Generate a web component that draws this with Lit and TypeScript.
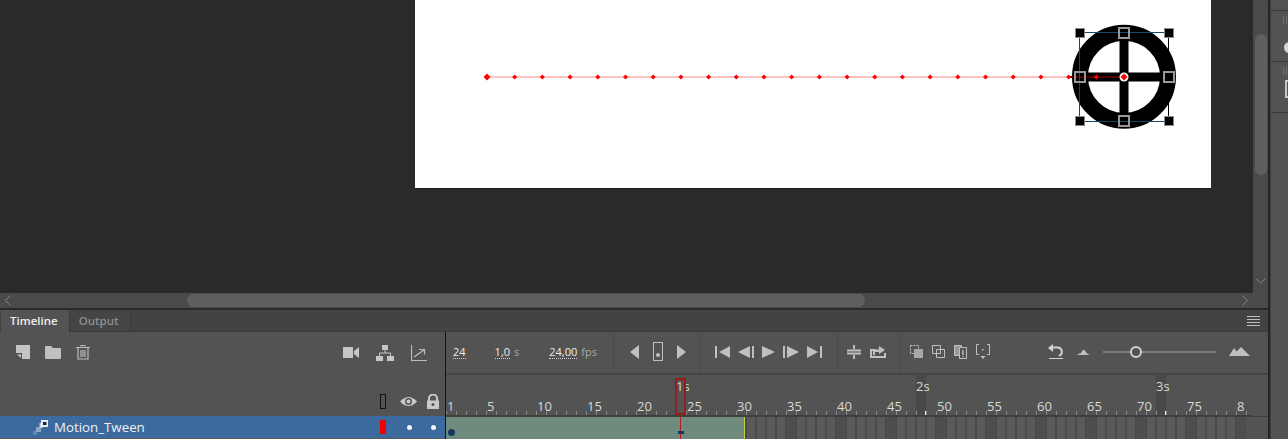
import { LitElement, html, css, svg } from "lit";
import { customElement } from "lit/decorators.js";

const FRAME_W = 10;
const TOTAL_FRAMES = 80;
const frameX = (n: number) => (n - 1) * FRAME_W;

const frameLabels = [1, 5, 10, 15, 20, 25, 30, 35, 40, 45, 50, 55, 60, 65, 70, 75];
const secondMarks = [
  { label: "2s", frame: 48 },
  { label: "3s", frame: 72 },
];
const pathDots = Array.from({ length: 24 }, (_, i) => 487 + (i * 637) / 23);

@customElement("app-root")
export class AppRoot extends LitElement {
  static styles = css`
    :host {
      display: flex;
      width: 1288px;
      height: 439px;
      overflow: hidden;
      background: #2a2a2a;
      font-family: "Open Sans", sans-serif;
      color: #e0e0e0;
    }
    svg {
      display: block;
      flex: none;
    }
    .main {
      width: 1268px;
      display: flex;
      flex-direction: column;
      border-right: 1px solid #222;
      box-sizing: content-box;
    }
    .side {
      flex: 1;
      margin-left: 1px;
      background: #535353;
      border-left: 1px solid #3c3c3c;
    }
    .side-sec {
      height: 50px;
      border-bottom: 1px solid #3a3a3a;
      display: flex;
      flex-direction: column;
      align-items: flex-end;
      overflow: hidden;
    }
    .side-sec.top {
      height: 10px;
    }
    .grip {
      width: 4px;
      height: 8px;
      margin: 5px 0 0;
      border-left: 1px solid #6c6c6c;
      border-right: 1px solid #6c6c6c;
      align-self: center;
      box-sizing: border-box;
      position: relative;
      left: 5px;
    }
    .side-dot {
      width: 11px;
      height: 11px;
      margin: 18px -7px 0 0;
      border-radius: 50%;
      background: #d6d6d6;
    }
    .side-doc {
      width: 12px;
      height: 14px;
      margin: 5px -13px 0 0;
      border: 2px solid #c8c8c8;
    }

    .stage-row {
      height: 293px;
      display: flex;
    }
    .canvas {
      width: 1253px;
      padding-left: 415px;
      box-sizing: border-box;
    }
    .paper {
      width: 796px;
      height: 188px;
      background: #fff;
      box-shadow: 0 1px 0 #1c1c1c;
    }
    .vscroll {
      width: 15px;
      background: #4a4a4a;
      padding: 34px 1px 0;
      box-sizing: border-box;
      display: flex;
      flex-direction: column;
      align-items: center;
    }
    .vthumb {
      width: 12px;
      height: 141px;
      background: #5f5f5f;
      border-radius: 6px;
    }
    .vscroll svg {
      margin-top: 103px;
    }
    .hscroll {
      height: 15px;
      background: #4a4a4a;
      display: flex;
      align-items: center;
      padding-left: 5px;
      box-sizing: border-box;
    }
    .hthumb {
      width: 678px;
      height: 13px;
      margin-left: 176px;
      background: #5f5f5f;
      border-radius: 7px;
    }
    .hscroll svg.next {
      margin-left: 377px;
    }
    .rule {
      height: 2px;
      background: #292929;
    }

    .tabs {
      height: 22px;
      display: flex;
      background: #434343;
      border-bottom: 1px solid #3a3a3a;
      box-sizing: border-box;
      align-items: stretch;
      padding-left: 1px;
    }
    .tab {
      font-size: 11.5px;
      font-weight: 600;
      line-height: 21px;
      padding: 0 11px 0 9px;
      color: #8f8f8f;
      background: #454545;
      border-right: 1px solid #3a3a3a;
    }
    .tab.on {
      color: #ededed;
      background: #535353;
      margin-bottom: -1px;
    }
    .tabs .fill {
      flex: 1;
    }
    .menu {
      margin: 6px 8px 0 0;
    }

    .body {
      flex: 1;
      display: flex;
      background: #535353;
    }
    .layers {
      width: 445px;
      display: flex;
      flex-direction: column;
      border-right: 1px solid #111;
      box-sizing: content-box;
    }
    .layer-tools {
      height: 42px;
      display: flex;
      align-items: center;
      padding: 0 18px 3px 16px;
      box-sizing: border-box;
      margin-top: 1px;
    }
    .layer-tools .l {
      display: flex;
      gap: 15px;
      flex: 1;
    }
    .layer-tools .r {
      display: flex;
      align-items: center;
      gap: 17px;
    }
    .layer-head {
      height: 41px;
      display: flex;
      align-items: flex-end;
      justify-content: flex-end;
      gap: 9px;
      padding: 0 5px 7px 0;
      box-sizing: border-box;
    }
    .layer-head .eye {
      margin-bottom: 2px;
    }
    .outline-box {
      width: 6px;
      height: 15px;
      border: 1px solid #111;
      box-sizing: border-box;
      margin-right: 5px;
    }
    .layer-row {
      height: 22px;
      background: #3c6a9e;
      display: flex;
      align-items: center;
      padding-left: 33px;
      font-size: 13.3px;
      color: #f0f0f0;
    }
    .layer-row .name {
      margin-left: 6px;
      width: 326px;
    }
    .swatch {
      width: 6px;
      height: 14px;
      background: #f00000;
    }
    .dot {
      width: 5px;
      height: 5px;
      border-radius: 50%;
      background: #f5f5f5;
    }
    .dot.eye {
      margin-left: 21px;
    }
    .dot.lock {
      margin-left: 19px;
    }

    .frames {
      flex: 1;
      display: flex;
      flex-direction: column;
      min-width: 0;
    }
    .controls {
      height: 42px;
      margin-top: 1px;
      display: flex;
      border-bottom: 2px solid #454545;
      box-sizing: border-box;
    }
    .group {
      display: flex;
      align-items: center;
      border-right: 1px solid #4b4b4b;
      box-sizing: border-box;
      padding-bottom: 3px;
    }
    .counters {
      width: 168px;
      padding-left: 7px;
      font-size: 11px;
      color: #ececec;
    }
    .num {
      border-bottom: 1px dotted #cfcfcf;
      line-height: 13px;
    }
    .unit {
      color: #a8a8a8;
      margin-left: 4px;
    }
    .c-elapsed {
      margin-left: 29px;
    }
    .c-fps {
      margin-left: 30px;
    }
    .nav {
      width: 87px;
      padding-left: 16px;
      gap: 14px;
    }
    .play {
      width: 137px;
      padding-left: 14px;
      gap: 8px;
    }
    .edit {
      width: 62px;
      padding-left: 9px;
      gap: 9px;
    }
    .onion {
      width: 148px;
      padding-left: 10px;
      gap: 9px;
      border-right: 0;
    }
    .zoom {
      display: flex;
      align-items: center;
      gap: 13px;
      padding-bottom: 3px;
    }
    .slider {
      width: 113px;
      height: 2px;
      background: #7c7c7c;
      position: relative;
    }
    .knob {
      position: absolute;
      left: 27px;
      top: -5px;
      width: 12px;
      height: 12px;
      border: 2px solid #d2d2d2;
      border-radius: 50%;
      background: #535353;
      box-sizing: border-box;
    }

    .ruler {
      height: 42px;
      position: relative;
      overflow: hidden;
      border-bottom: 1px solid #3f3f3f;
      box-sizing: border-box;
    }
    .ticks {
      position: absolute;
      left: 0;
      width: 806px;
      bottom: 1px;
      height: 4px;
      background: repeating-linear-gradient(
        90deg,
        #8a8a8a 0 1px,
        transparent 1px 10px
      );
    }
    .ruler-line {
      position: absolute;
      left: 0;
      width: 806px;
      bottom: 0;
      height: 1px;
      background: #3d3d3d;
    }
    .flabel {
      position: absolute;
      top: 22px;
      font-size: 13px;
      line-height: 18px;
      color: #d8d8d8;
    }
    .slabel {
      position: absolute;
      top: 2px;
      font-size: 13px;
      line-height: 18px;
      color: #d8d8d8;
    }
    .sband {
      position: absolute;
      top: 0;
      bottom: 0;
      width: 10px;
      background: #494949;
    }
    .sband::before,
    .sband::after {
      content: "";
      position: absolute;
      bottom: 1px;
      width: 1px;
      height: 4px;
      background: #f0f0f0;
    }
    .sband::before {
      left: 0;
    }
    .sband::after {
      right: 0;
    }
    .playhead {
      position: absolute;
      left: 229px;
      top: 3px;
      width: 11px;
      height: 37px;
      border: 1px solid #a51818;
      box-sizing: border-box;
      box-shadow: inset 0 0 0 1px #8f1d1d;
    }

    .track {
      flex: 1;
      position: relative;
      overflow: hidden;
      background: #535353;
    }
    .tween {
      position: absolute;
      left: 0;
      top: 0;
      width: 299px;
      height: 100%;
      box-sizing: border-box;
      background: #6f8b7e;
      border-right: 1px solid #c8cf4c;
    }
    .cells {
      position: absolute;
      left: 299px;
      top: 0;
      width: 500px;
      height: 100%;
      display: flex;
      background: #4b4b4b;
      padding-left: 1px;
      box-sizing: content-box;
    }
    .cell {
      width: 10px;
      flex: none;
      box-sizing: border-box;
      background: #5a5a5a;
      border-left: 1px solid #4b4b4b;
      border-right: 1px solid #4b4b4b;
    }
    .cell.fifth {
      background: #4e4e4e;
    }
    .key {
      position: absolute;
      left: 2px;
      top: 12px;
      width: 7px;
      height: 7px;
      border-radius: 50%;
      background: #16385f;
    }
    .now-line {
      position: absolute;
      left: 234px;
      top: 0;
      width: 1px;
      height: 100%;
      background: #b31f1f;
    }
    .now-key {
      position: absolute;
      left: 232px;
      top: 14px;
      width: 6px;
      height: 3px;
      background: #16385f;
    }
    .foot {
      height: 1px;
      background: #5a5a5a;
    }
  `;

  private stage() {
    const handles = [
      [1080, 33, 1],
      [1169, 33, 1],
      [1080, 121, 1],
      [1169, 121, 1],
      [1124, 33, 0],
      [1124, 121, 0],
      [1080, 77, 0],
      [1169, 77, 0],
    ];
    return html`<svg width="796" height="188" viewBox="415 0 796 188">
      <line x1="487" y1="77" x2="1124" y2="77" stroke="#ffc2c2" stroke-width="2" />
      <circle cx="1124" cy="76.7" r="44" fill="none" stroke="#000" stroke-width="16" />
      <rect x="1119.5" y="30" width="9" height="93" fill="#000" />
      <rect x="1078" y="72.5" width="92" height="9" fill="#000" />
      <line x1="1069" y1="77" x2="1124" y2="77" stroke="#4d0000" stroke-width="2" />
      <path d="M1080 32.5H1169M1080 121.5H1169M1079.5 33V121" fill="none" stroke="#174a6a" />
      <path d="M1168.5 33V121" fill="none" stroke="#000" />
      ${pathDots.map((x, i) => {
        const r = i == 0 ? 3.5 : 2.5;
        return svg`<path d="M${x} ${77 - r}l${r} ${r}l-${r} ${r}l-${r} -${r}z" fill="#f00" />`;
      })}
      ${handles.map(([x, y, corner]) =>
        corner
          ? svg`<rect x=${x - 4.5} y=${y - 4.5} width="9" height="9" fill="#000" stroke="#8a8a8a" stroke-width="1" />`
          : svg`<rect x=${x - 5} y=${y - 5} width="10" height="10" fill="none" stroke="#999" stroke-width="2" />`
      )}
      <circle cx="1124" cy="77" r="4.5" fill="#fff" />
      <path d="M1124 73.500l3.500 3.500-3.500 3.500-3.500-3.500z" fill="#f00" />
    </svg>`;
  }

  private layerTools() {
    return html`<div class="layer-tools">
      <div class="l">
        <svg width="14" height="14" viewBox="0 0 14 14"><path d="M0 0h14v14H6V8H0z" fill="#c4c4c4" /><path d="M1 9.500h4v3.500z" fill="#c4c4c4" /></svg>
        <svg width="16" height="14" viewBox="0 0 16 14"><path d="M0 2q0-1 1-1h5l2 2h7q1 0 1 1v9q0 1-1 1H1q-1 0-1-1z" fill="#c0c0c0" /></svg>
        <svg width="14" height="15" viewBox="0 0 14 15"><path d="M5 1.500V.5h4v1M0 2.500h14M2 3v11h10V3M5 5v7M7 5v7M9 5v7" fill="none" stroke="#bdbdbd" stroke-width="1.2" /></svg>
      </div>
      <div class="r">
        <svg width="16" height="11" viewBox="0 0 16 11"><path d="M0 0h10v11H0zM11 4l5-4v11l-5-4z" fill="#c6c6c6" /></svg>
        <svg width="18" height="16" viewBox="0 0 18 16"><path d="M6 0h6v5H6zM0 11h7v5H0zM11 11h7v5h-7z" fill="#c6c6c6" /><path d="M9 5v3M3.500 11V8h11v3" fill="none" stroke="#c6c6c6" /></svg>
        <svg width="16" height="16" viewBox="0 0 16 16"><path d="M.5 0v15.500H16M3 12l10-7M8 4.500h5.500v5" fill="none" stroke="#bdbdbd" stroke-width="1.2" /></svg>
      </div>
    </div>`;
  }

  private layerHead() {
    return html`<div class="layer-head">
      <div class="outline-box"></div>
      <svg class="eye" width="17" height="11" viewBox="0 0 17 11"><path d="M0 5.500Q8.500-3.500 17 5.500 8.500 14.500 0 5.500z" fill="#c9c9c9" /><circle cx="8.500" cy="5.500" r="3.500" fill="#535353" /><circle cx="8.500" cy="5.500" r="2" fill="#c9c9c9" /></svg>
      <svg width="14" height="15" viewBox="0 0 14 15"><path d="M3 7V4.500a4 4 0 0 1 8 0V7" fill="none" stroke="#c9c9c9" stroke-width="2" /><path d="M1 6.500h12V15H1z" fill="#c9c9c9" /><circle cx="7" cy="10.500" r="1.500" fill="#535353" /></svg>
    </div>`;
  }

  private controls() {
    const c = "#c0c0c0";
    return html`<div class="controls">
      <div class="group counters">
        <span class="num">24</span>
        <span class="num c-elapsed">1,0</span><span class="unit">s</span>
        <span class="num c-fps">24,00</span><span class="unit">fps</span>
      </div>
      <div class="group nav">
        <svg width="9" height="14" viewBox="0 0 9 14"><path d="M9 0v14L0 7z" fill=${c} /></svg>
        <svg width="10" height="19" viewBox="0 0 10 19"><rect x=".5" y=".5" width="9" height="18" fill="none" stroke=${c} /><circle cx="5" cy="13" r="2" fill=${c} /></svg>
        <svg width="9" height="14" viewBox="0 0 9 14"><path d="M0 0v14l9-7z" fill=${c} /></svg>
      </div>
      <div class="group play">
        <svg width="15" height="12" viewBox="0 0 15 12"><path d="M0 0h2v12H0zM15 0v12L4 6z" fill=${c} /></svg>
        <svg width="16" height="12" viewBox="0 0 16 12"><path d="M12 0v12L0 6zM14 0h2v12h-2z" fill=${c} /></svg>
        <svg width="13" height="12" viewBox="0 0 13 12"><path d="M0 0v12l13-6z" fill=${c} /></svg>
        <svg width="16" height="12" viewBox="0 0 16 12"><path d="M0 0h2v12H0zM4 0v12l12-6z" fill=${c} /></svg>
        <svg width="15" height="12" viewBox="0 0 15 12"><path d="M0 0v12l11-6zM13 0h2v12h-2z" fill=${c} /></svg>
      </div>
      <div class="group edit">
        <svg width="14" height="14" viewBox="0 0 14 14"><path d="M6 0h2v4H6zM6 10h2v4H6z" fill=${c} /><path d="M0 4.500h14v5H0z" fill=${c} /><path d="M0 7h14" stroke="#535353" /></svg>
        <svg width="16" height="13" viewBox="0 0 16 13"><path d="M0 4h6v2H2v5h12V8h2v5H0z" fill=${c} /><path d="M3 10V4.500h6V1l6 4-6 4V7H5v3z" fill=${c} /></svg>
      </div>
      <div class="group onion">
        <svg width="13" height="13" viewBox="0 0 13 13"><path d="M.5.500h8v8h-8z" fill="none" stroke=${c} stroke-dasharray="2 1" /><path d="M4 4h9v9H4z" fill="#a8a8a8" /></svg>
        <svg width="13" height="13" viewBox="0 0 13 13"><path d="M.5.500h8v8h-8zM4.500 4.500h8v8h-8z" fill="#535353" stroke=${c} /></svg>
        <svg width="13" height="15" viewBox="0 0 13 15"><path d="M.5 1.500h7v10h-7z" fill="#999" stroke=${c} /><path d="M5.500 3.500h7v11h-7z" fill="#535353" stroke=${c} /><path d="M8.500 6h1v5h-1zM8.500 12h1v1h-1z" fill="#eee" /></svg>
        <svg width="14" height="15" viewBox="0 0 14 15"><path d="M3 .5H.5v10H3M11 .5h2.500v10H11" fill="none" stroke=${c} /><path d="M6 5h1.500v1.500H6zM4.500 12h5L7 15z" fill=${c} /></svg>
      </div>
      <div class="zoom">
        <svg width="16" height="15" viewBox="0 0 16 15"><path d="M1 14.500h14" stroke="#d0d0d0" /><path d="M5 3.500h4a4.300 4.300 0 0 1 2 8.300" fill="none" stroke="#d0d0d0" stroke-width="2" /><path d="M0 4l5-4v8z" fill="#d0d0d0" /></svg>
        <svg width="13" height="6" viewBox="0 0 13 6"><path d="M0 6l2-1.500h1.500L6 1h1.500L9 3l1 1.500 3 1.500z" fill=${c} /></svg>
        <div class="slider"><div class="knob"></div></div>
        <svg width="21" height="9" viewBox="0 0 21 9"><path d="M0 9l5-8 2.500 3.500L12 0l9 9z" fill=${c} /></svg>
      </div>
    </div>`;
  }

  private ruler() {
    return html`<div class="ruler">
      ${secondMarks.map(
        (m) => html`<div class="sband" style="left:${frameX(m.frame)}px"></div>`
      )}
      <div class="ticks"></div>
      <div class="ruler-line"></div>
      ${frameLabels.map(
        (n) => html`<span class="flabel" style="left:${frameX(n) + 1}px">${n}</span>`
      )}
      <span class="flabel" style="left:${frameX(80) + 1}px">8</span>
      <span class="slabel" style="left:${frameX(24)}px">1s</span>
      ${secondMarks.map(
        (m) => html`<span class="slabel" style="left:${frameX(m.frame)}px">${m.label}</span>`
      )}
      <div class="playhead"></div>
    </div>`;
  }

  private track() {
    const cells = [];
    for (let n = 31; n <= TOTAL_FRAMES; n++) {
      cells.push(html`<div class="cell ${n % 5 == 0 ? "fifth" : ""}"></div>`);
    }
    return html`<div class="track">
      <div class="cells">${cells}</div>
      <div class="tween"></div>
      <div class="key"></div>
      <div class="now-line"></div>
      <div class="now-key"></div>
    </div>`;
  }

  render() {
    return html`
      <div class="main">
        <div class="stage-row">
          <div class="canvas"><div class="paper">${this.stage()}</div></div>
          <div class="vscroll">
            <div class="vthumb"></div>
            <svg width="11" height="6" viewBox="0 0 11 6"><path d="M.5.500l5 4.500 5-4.500" fill="none" stroke="#858585" /></svg>
          </div>
        </div>
        <div class="hscroll">
          <svg width="6" height="11" viewBox="0 0 6 11"><path d="M5.500.500L.5 5.500l5 5" fill="none" stroke="#858585" /></svg>
          <div class="hthumb"></div>
          <svg class="next" width="6" height="11" viewBox="0 0 6 11"><path d="M.5.500l5 5-5 5" fill="none" stroke="#858585" /></svg>
        </div>
        <div class="rule"></div>
        <div class="tabs">
          <div class="tab on">Timeline</div>
          <div class="tab">Output</div>
          <div class="fill"></div>
          <svg class="menu" width="13" height="10" viewBox="0 0 13 10"><path d="M0 .5h13M0 3.500h13M0 6.500h13M0 9.500h13" stroke="#bdbdbd" /></svg>
        </div>
        <div class="body">
          <div class="layers">
            ${this.layerTools()} ${this.layerHead()}
            <div class="layer-row">
              <svg width="15" height="15" viewBox="0 0 15 15">
                <path d="M0 11h4v4H0z" fill="#5d86b5" />
                <path d="M3 7h5v5H3z" fill="#8aa7c9" />
                <path d="M6.500 3h3v5h-3z" fill="#c4d2e2" />
                <path d="M8 0h7v7H8z" fill="#e6ecf3" />
                <path d="M10 2h3.500v3H10z" fill="#16243a" />
              </svg>
              <span class="name">Motion_Tween</span>
              <div class="swatch"></div>
              <div class="dot eye"></div>
              <div class="dot lock"></div>
            </div>
            <div class="foot"></div>
          </div>
          <div class="frames">${this.controls()} ${this.ruler()} ${this.track()}</div>
        </div>
      </div>
      <div class="side">
        <div class="side-sec top"></div>
        <div class="side-sec"><div class="grip"></div><div class="side-dot"></div></div>
        <div class="side-sec"><div class="grip"></div><div class="side-doc"></div></div>
      </div>
    `;
  }
}
